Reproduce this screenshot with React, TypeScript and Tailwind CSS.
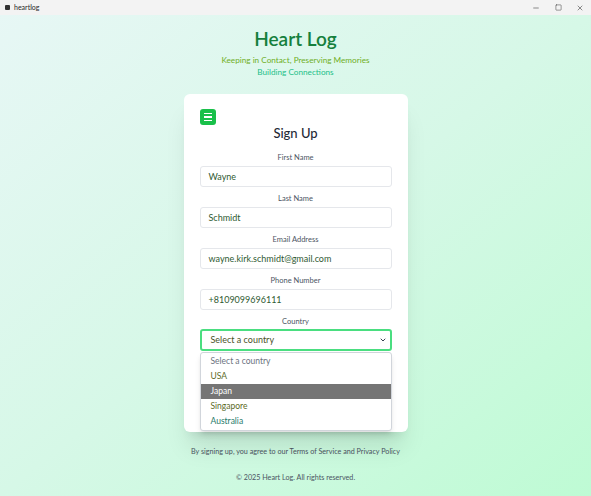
import { ChevronDown, Minus, Square, X } from "lucide-react";

const fields = [
  { label: "First Name", value: "Wayne" },
  { label: "Last Name", value: "Schmidt" },
  { label: "Email Address", value: "wayne.kirk.schmidt@gmail.com" },
  { label: "Phone Number", value: "+8109099696111" },
];

const options = ["Select a country", "USA", "Japan", "Singapore", "Australia"];

function TitleBar() {
  return (
    <div className="h-[15px] bg-[#f3f3f3] flex items-center justify-between pl-[5px] text-[7px] text-[#1f1f1f]">
      <div className="flex items-center gap-[4px]">
        <div className="w-[5px] h-[5px] bg-[#333] rounded-[1px]" />
        <span>heartlog</span>
      </div>
      <div className="flex items-center h-full">
        <div className="w-[22px] flex justify-center">
          <Minus size={8} strokeWidth={1.5} />
        </div>
        <div className="w-[22px] flex justify-center">
          <Square size={7} strokeWidth={1.5} />
        </div>
        <div className="w-[22px] flex justify-center">
          <X size={8} strokeWidth={1.5} />
        </div>
      </div>
    </div>
  );
}

export default function App() {
  return (
    <div
      className="w-[591px] h-[496px] overflow-hidden flex flex-col"
      style={{ fontFamily: "Lato, 'Open Sans', sans-serif" }}
    >
      <TitleBar />
      <main className="flex-1 flex flex-col items-center bg-gradient-to-br from-[#e7f7f5] via-[#d6f8e7] to-[#befbd4]">
        <h1 className="mt-[13px] text-[19px] leading-[22px] font-semibold text-[#15803d]">
          Heart Log
        </h1>
        <div className="mt-[4px] text-[8.2px] leading-[12px] text-center">
          <p className="text-[#6fae1f]">Keeping in Contact, Preserving Memories</p>
          <p className="text-[#22bf88]">Building Connections</p>
        </div>

        <div className="relative mt-[16px] w-[224px] bg-white rounded-md shadow-xl px-[16px] pt-[15px] pb-[43px]">
          <button className="w-[16px] h-[16px] rounded-[3px] bg-[#19c04a] flex flex-col items-center justify-center gap-[2px]">
            <span className="block w-[8px] h-[1.5px] bg-white" />
            <span className="block w-[8px] h-[1.5px] bg-white" />
            <span className="block w-[8px] h-[1.5px] bg-white" />
          </button>
          <h2 className="text-center text-[13px] leading-[16px] font-medium text-[#1f2937]">
            Sign Up
          </h2>

          <div className="mt-[10px] flex flex-col gap-[5px]">
            {fields.map((f) => (
              <div key={f.label}>
                <label className="block text-center text-[7.5px] leading-[14px] text-[#4b5563] mb-[1px]">
                  {f.label}
                </label>
                <div className="h-[21px] border border-[#e5e7eb] rounded-[3px] flex items-center px-[8px] text-[9px] text-[#2f5a32]">
                  {f.value}
                </div>
              </div>
            ))}
            <div>
              <label className="block text-center text-[7.5px] leading-[14px] text-[#4b5563] mb-0">
                Country
              </label>
              <div className="h-[22px] border-2 border-[#4ade80] rounded-[3px] flex items-center justify-between pl-[9px] pr-[3px] text-[9px] text-[#4a5228]">
                <span>Select a country</span>
                <ChevronDown size={8} strokeWidth={3} className="text-[#374151]" />
              </div>
            </div>
          </div>

          <button className="mt-[11px] w-full h-[21px] rounded-[3px] bg-[#22c55e]" />

          {/* open native select list */}
          <div className="absolute left-[16px] top-[258px] w-[192px] bg-white border border-[#d1d5db] rounded-[3px] shadow-md py-[1px] text-[8.5px]">
            {options.map((o, i) => (
              <div
                key={o}
                className={`h-[15px] flex items-center pl-[10px] ${
                  i === 2
                    ? "bg-[#757575] text-white"
                    : i === 0
                      ? "text-[#6b7280]"
                      : i === 4
                        ? "text-[#1f7a6a]"
                        : "text-[#5b6a1f]"
                }`}
              >
                {o}
              </div>
            ))}
          </div>
        </div>

        <p className="mt-[14px] text-[7.2px] leading-[12px] text-[#4b5563]">
          By signing up, you agree to our Terms of Service and Privacy Policy
        </p>
        <p className="mt-[14px] text-[7.2px] leading-[12px] text-[#4b5563]">
          © 2025 Heart Log. All rights reserved.
        </p>
      </main>
    </div>
  );
}
